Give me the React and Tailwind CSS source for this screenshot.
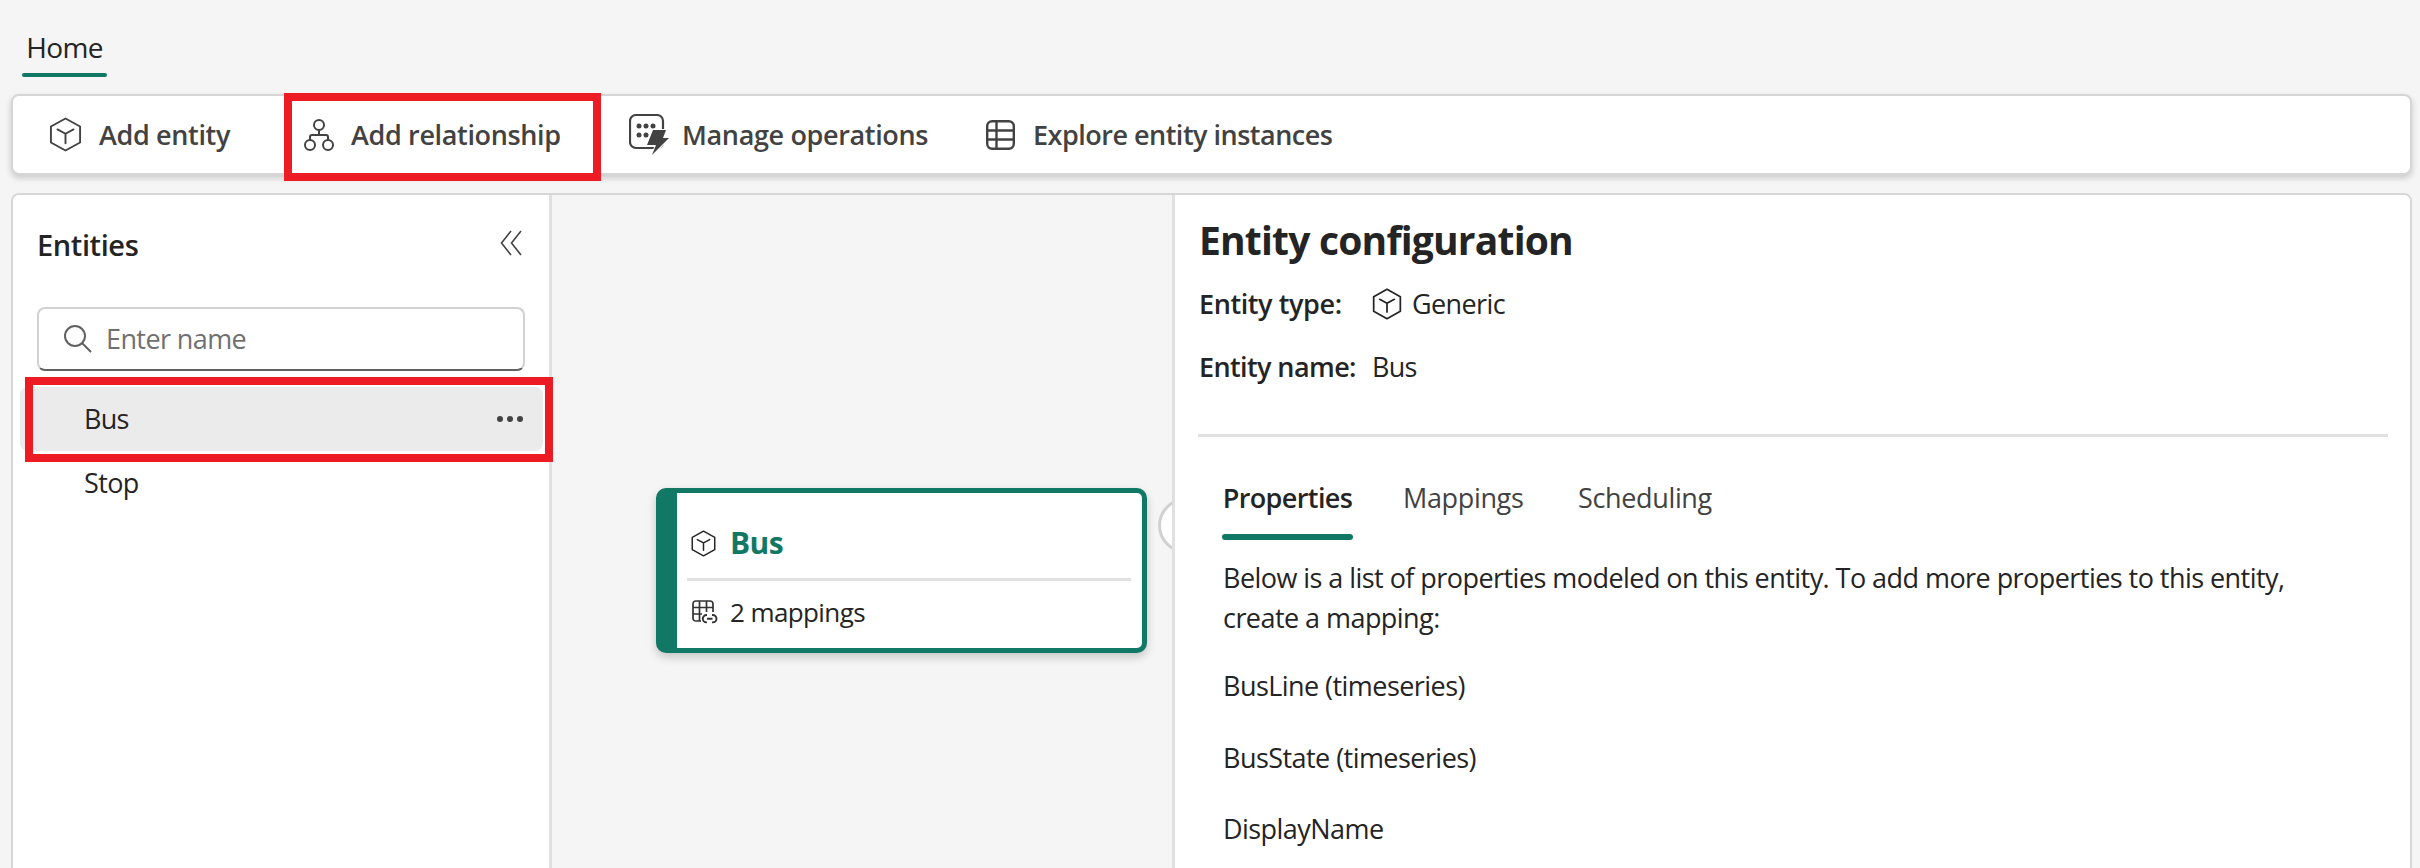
const F = "font-['Open_Sans','Noto_Sans',sans-serif]";

function Cube({ className, color = "#424242", sw = 1.3 }) {
  return (
    <svg viewBox="0 0 24 24" className={className} fill="none" stroke={color} strokeWidth={sw} strokeLinejoin="round" strokeLinecap="round">
      <path d="M12 1 22 6.5V17.5L12 23 2 17.5V6.5Z" />
      <path d="M6.5 8.5 12 11.5 17.5 8.5M12 11.5V18" />
    </svg>
  );
}

function Relationship() {
  return (
    <svg viewBox="0 0 30 32" className="w-[30px] h-[32px]" fill="none" stroke="#424242" strokeWidth="2">
      <circle cx="15" cy="6" r="5" />
      <circle cx="6" cy="26" r="5" />
      <circle cx="24" cy="26" r="5" />
      <path d="M15 11V16M6 21V18Q6 16 8 16H22Q24 16 24 18V21" />
    </svg>
  );
}

function Manage() {
  return (
    <svg viewBox="0 0 40 42" className="w-[40px] h-[42px]" fill="none">
      <rect x="1" y="1" width="33" height="33" rx="6" stroke="#424242" strokeWidth="2.2" />
      <g fill="#424242">
        <circle cx="10" cy="12" r="2.5" /><circle cx="17" cy="12" r="2.5" /><circle cx="24" cy="12" r="2.5" />
        <circle cx="10" cy="21" r="2.5" /><circle cx="17" cy="21" r="2.5" />
      </g>
      <path d="M24 16H37L34 24H40L23 41 27 31H18Z" fill="#424242" stroke="#ffffff" strokeWidth="2" strokeLinejoin="round" paintOrder="stroke" />
    </svg>
  );
}

function TableIcon() {
  return (
    <svg viewBox="0 0 29 30" className="w-[29px] h-[30px]" fill="none" stroke="#424242" strokeWidth="2.4">
      <rect x="1.2" y="1.2" width="26.6" height="27.6" rx="5" />
      <path d="M1 10.5H28M1 19.5H28M10.5 1V29" />
    </svg>
  );
}

function MappingIcon() {
  return (
    <svg viewBox="0 0 26 24" className="w-[26px] h-[24px]" fill="none" stroke="#333333" strokeWidth="1.7">
      <path d="M9 21H4Q1 21 1 18V4Q1 1 4 1H18Q21 1 21 4V12" />
      <path d="M1 7.5H21M1 14H10M7.5 1V21M14.5 1V12" />
      <path d="M15 15H14.5A3.7 3.7 0 0 0 14.5 22.4H15M20 15H20.8A3.7 3.7 0 0 1 20.8 22.4H20M15 18.7H20.5" strokeWidth="1.9" />
    </svg>
  );
}

function Tool({ w, gap, children, label, tracking }) {
  return (
    <div className={`flex items-center shrink-0 ${w} ${gap}`}>
      {children}
      <span className={`text-[27px] leading-[36px] font-semibold text-[#424242] whitespace-nowrap ${tracking}`}>{label}</span>
    </div>
  );
}

export default function App() {
  return (
    <div className={`relative w-[2420px] h-[868px] overflow-hidden bg-[#f5f5f5] text-[#242424] ${F}`}>
      <div className="h-[94px] pl-[22px] pt-[30px]">
        <div className="w-[85px] flex flex-col items-center">
          <span className="text-[28px] leading-[34px] font-medium whitespace-nowrap tracking-[-0.7px]">Home</span>
          <div className="mt-[9px] w-full h-[4px] rounded-full bg-[#117865]" />
        </div>
      </div>

      <div className="ml-[11px] mr-[8px] h-[81px] box-border flex items-center pl-[35px] bg-white rounded-lg border-2 border-[#d6d6d6] shadow-[0_3px_6px_rgba(0,0,0,0.18)]">
        <Tool w="w-[256px]" gap="gap-[16px]" label="Add entity" tracking="tracking-[-0.35px]">
          <Cube className="w-[35px] h-[35px]" />
        </Tool>
        <Tool w="w-[325px]" gap="gap-[17px]" label="Add relationship" tracking="tracking-[-0.35px]">
          <Relationship />
        </Tool>
        <Tool w="w-[357px]" gap="gap-[13px]" label="Manage operations" tracking="tracking-[-0.35px]">
          <Manage />
        </Tool>
        <Tool w="w-[360px]" gap="gap-[18px]" label="Explore entity instances" tracking="tracking-[-0.5px]">
          <TableIcon />
        </Tool>
      </div>

      <div className="ml-[11px] mr-[8px] mt-[18px] h-[720px] box-border flex bg-white rounded-t-lg border-2 border-[#d6d6d6] overflow-hidden">
        <aside className="w-[539px] shrink-0 box-border border-r-[3px] border-[#e0e0e0] bg-white">
          <div className="mt-[30px] h-[40px] flex items-center justify-between pl-[24px] pr-[27px]">
            <span className="text-[29px] leading-[40px] font-semibold tracking-[-0.4px]">Entities</span>
            <svg viewBox="0 0 22 26" className="w-[22px] h-[26px] mb-[4px]" fill="none" stroke="#424242" strokeWidth="1.6">
              <path d="M11 1 1.5 13 11 25M21 1 11.5 13 21 25" />
            </svg>
          </div>
          <div className="mt-[42px] ml-[24px] w-[488px] h-[64px] box-border flex items-center pl-[25px] gap-[14px] rounded-lg border-2 border-[#d1d1d1] border-b-[#616161] bg-white">
            <svg viewBox="0 0 28 28" className="w-[28px] h-[28px]" fill="none" stroke="#616161" strokeWidth="2">
              <circle cx="11" cy="11" r="10" />
              <path d="M18 18 27 27" />
            </svg>
            <span className="text-[27px] leading-[36px] text-[#707070] tracking-[-0.6px]">Enter name</span>
          </div>
          <div className="mt-[16px] ml-[7px] w-[523px] h-[64px] flex items-center justify-between pl-[64px] pr-[20px] rounded-lg bg-[#ebebeb]">
            <span className="text-[27px] leading-[36px] tracking-[-0.8px]">Bus</span>
            <div className="flex gap-[4px]">
              <span className="w-[6px] h-[6px] rounded-full bg-[#424242]" />
              <span className="w-[6px] h-[6px] rounded-full bg-[#424242]" />
              <span className="w-[6px] h-[6px] rounded-full bg-[#424242]" />
            </div>
          </div>
          <div className="ml-[7px] h-[64px] flex items-center pl-[64px]">
            <span className="text-[27px] leading-[36px] tracking-[-0.6px]">Stop</span>
          </div>
        </aside>

        <div className="w-[620px] shrink-0 bg-[#f5f5f5]" />

        <section className="flex-1 box-border border-l-[3px] border-[#e0e0e0] bg-white pl-[24px]">
          <h1 className="mt-[21px] text-[39px] leading-[48px] font-bold tracking-[-0.8px]">Entity configuration</h1>
          <div className="mt-[19px] h-[42px] flex items-center">
            <span className="w-[172px] text-[27px] font-semibold tracking-[-0.4px]">Entity type:</span>
            <Cube className="w-[32px] h-[32px]" color="#242424" />
            <span className="ml-[9px] text-[27px] tracking-[-0.6px]">Generic</span>
          </div>
          <div className="mt-[21px] h-[42px] flex items-center">
            <span className="w-[173px] text-[27px] font-semibold tracking-[-0.6px]">Entity name:</span>
            <span className="text-[27px] tracking-[-0.8px]">Bus</span>
          </div>
          <div className="mt-[46px] -ml-[1px] w-[1190px] h-[3px] bg-[#e0e0e0]" />
          <div className="mt-[41px] ml-[23px] flex">
            <div className="w-[181px]">
              <div className="w-[131px] text-center text-[27px] leading-[40px] font-semibold tracking-[-0.6px]">Properties</div>
              <div className="mt-[16px] w-[131px] h-[6px] rounded-full bg-[#117865]" />
            </div>
            <div className="w-[175px] text-[27px] leading-[40px] text-[#424242] tracking-[-0.35px]">Mappings</div>
            <div className="text-[27px] leading-[40px] text-[#424242] tracking-[-0.35px]">Scheduling</div>
          </div>
          <div className="ml-[24px] text-[27px] leading-[40px] tracking-[-0.55px] whitespace-nowrap">
            <p className="mt-[18px]">Below is a list of properties modeled on this entity. To add more properties to this entity,<br />create a mapping:</p>
            <p className="mt-[28px]">BusLine (timeseries)</p>
            <p className="mt-[32px]">BusState (timeseries)</p>
            <p className="mt-[31px]">DisplayName</p>
          </div>
        </section>
      </div>

      {/* Diagram canvas items */}
      <div className="absolute left-[1158px] top-[498px] w-[55px] h-[55px] rounded-full border-[3px] border-[#d1d1d1] bg-white [clip-path:inset(0_41px_0_0)]" />
      <div className="absolute left-[656px] top-[488px] w-[491px] h-[165px] box-border rounded-[10px] border-[5px] border-l-[21px] border-[#117865] bg-white shadow-[0_4px_10px_rgba(0,0,0,0.2)]">
        <div className="h-[85px] flex items-center pt-[15px] pl-[13px] gap-[13px]">
          <Cube className="w-[27px] h-[27px]" color="#242424" />
          <span className="text-[30px] leading-[40px] font-bold text-[#117865] tracking-[-0.6px]">Bus</span>
        </div>
        <div className="ml-[10px] w-[444px] h-[3px] bg-[#e0e0e0]" />
        <div className="mt-[13px] flex items-center pl-[15px] gap-[12px]">
          <MappingIcon />
          <span className="text-[26px] leading-[36px] tracking-[-0.6px]">2 mappings</span>
        </div>
      </div>

      {/* Red annotation boxes */}
      <div className="absolute left-[284px] top-[93px] w-[317px] h-[88px] box-border border-[8px] border-[#ed1c24]" />
      <div className="absolute left-[25px] top-[377px] w-[528px] h-[85px] box-border border-[8px] border-[#ed1c24]" />
    </div>
  );
}
